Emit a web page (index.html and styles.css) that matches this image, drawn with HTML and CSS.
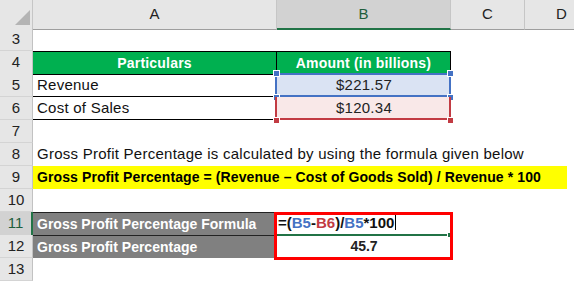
FILE: index.html
```html
<html>
<head>
<meta charset="utf-8">
<title>Gross Profit Percentage</title>
<link rel="stylesheet" href="styles.css">
</head>
<body>
<div class='sheet'>
  <div class='row head'>
    <div class='corner'>
      <svg width='33' height='28'><polygon points='15,25 30,25 30,10' fill='#b4b4b4'/></svg>
    </div>
    <div class='col'>A</div>
    <div class='col active'>B</div>
    <div class='col'>C</div>
    <div class='col'>D</div>
  </div>
  <div class='row'>
    <div class='num'>3</div><div></div><div></div><div></div><div></div>
  </div>
  <div class='row'>
    <div class='num'>4</div>
    <div class='th'>Particulars</div>
    <div class='th'>Amount (in billions)</div>
    <div></div><div></div>
  </div>
  <div class='row'>
    <div class='num'>5</div>
    <div class='label'>Revenue</div>
    <div class='val pick-blue'>$221.57
      <span class='dot tl'></span><span class='dot tr'></span>
      <span class='dot bl'></span><span class='dot br'></span>
    </div>
    <div></div><div></div>
  </div>
  <div class='row'>
    <div class='num'>6</div>
    <div class='label'>Cost of Sales</div>
    <div class='val pick-red'>$120.34
      <span class='dot bl red'></span><span class='dot br red'></span>
    </div>
    <div></div><div></div>
  </div>
  <div class='row'>
    <div class='num'>7</div><div></div><div></div><div></div><div></div>
  </div>
  <div class='row'>
    <div class='num'>8</div>
    <div class='wide'>Gross Profit Percentage is calculated by using the formula given below</div>
  </div>
  <div class='row'>
    <div class='num'>9</div>
    <div class='wide hl'>Gross Profit Percentage = (Revenue – Cost of Goods Sold) / Revenue * 100</div>
  </div>
  <div class='row'>
    <div class='num'>10</div><div></div><div></div><div></div><div></div>
  </div>
  <div class='row'>
    <div class='num current'>11</div>
    <div class='grey'>Gross Profit Percentage Formula</div>
    <div class='formula'>=(<span class='ref-b'>B5</span>-<span class='ref-r'>B6</span>)/<span class='ref-b'>B5</span>*100<span class='caret'></span>
      <span class='dot edit'></span>
    </div>
    <div></div><div></div>
  </div>
  <div class='row'>
    <div class='num'>12</div>
    <div class='grey'>Gross Profit Percentage</div>
    <div class='val result'>45.7</div>
    <div></div><div></div>
  </div>
  <div class='row'>
    <div class='num'>13</div><div></div><div></div><div></div><div></div>
  </div>
</div>
</body>
</html>
```

FILE: styles.css
```css
body {
  margin: 0;
  background: #fff;
  font-family: "Liberation Sans", Arial, sans-serif;
  font-size: 15px;
  letter-spacing: 0.25px;
  color: #111;
  overflow: hidden;
}
.sheet {
  width: 574px;
  height: 283px;
  overflow: hidden;
}
.row {
  display: grid;
  grid-template-columns: 33px 244px 174px 74px 74px;
  height: 23px;
}
.row > div {
  box-sizing: border-box;
  line-height: 22px;
  white-space: nowrap;
  padding: 0 4px;
}
.row.head {
  height: 28px;
}
.corner {
  background: #e6e6e6;
  border-right: 1px solid #c6c6c6;
  border-bottom: 1px solid #9e9e9e;
  padding: 0 !important;
  line-height: 0 !important;
}
.col {
  background: #e6e6e6;
  border-right: 1px solid #c6c6c6;
  border-bottom: 1px solid #9e9e9e;
  text-align: center;
  line-height: 28px !important;
  letter-spacing: 0;
  color: #222;
}
.col.active {
  background: #d2d2d2;
  border-bottom: 2px solid #217346;
  color: #1e5e3c;
}
.num {
  background: #e6e6e6;
  border-right: 1px solid #c2c2c2;
  border-bottom: 1px solid #d4d4d4;
  text-align: center;
  letter-spacing: 0;
  color: #222;
  padding: 0 !important;
}
.num.current {
  background: #d2d2d2;
  border-right: 2px solid #217346;
  color: #1e5e3c;
}
.th {
  background: #00b050;
  color: #fff;
  font-size: 14px;
  font-weight: bold;
  letter-spacing: 0.2px;
  text-align: center;
  border-top: 1px solid #000;
  border-right: 1px solid #000;
  border-bottom: 1px solid #000;
}
.label {
  border-bottom: 1px solid #000;
}
.val {
  text-align: center;
  color: #222;
  position: relative;
}
.pick-blue {
  background: #dae3f3;
}
.pick-blue::before {
  content: '';
  position: absolute;
  top: -1px;
  left: -2px;
  right: 0;
  bottom: 0;
  border: 2px solid #4472c4;
}
.pick-red {
  background: #f9e8e8;
}
.pick-red::before {
  content: '';
  position: absolute;
  top: 0;
  left: -2px;
  right: 0;
  bottom: 0;
  border: 2px solid #c23b43;
  border-top: none;
}
.dot {
  position: absolute;
  width: 5px;
  height: 5px;
  background: #4472c4;
  outline: 1px solid #fff;
}
.dot.red {
  background: #c23b43;
}
.tl { top: -3px; left: -3px; }
.tr { top: -3px; right: -2px; }
.bl { bottom: -3px; left: -3px; }
.br { bottom: -3px; right: -2px; }
.wide {
  grid-column: 2 / -1;
}
.hl {
  background: #ffff00;
  font-size: 14px;
  font-weight: bold;
  letter-spacing: 0.1px;
  margin-right: 32px;
  color: #000;
}
.grey {
  background: #808080;
  color: #fff;
  font-size: 14px;
  font-weight: bold;
  letter-spacing: 0;
  border-top: 1px solid #222;
}
.formula {
  position: relative;
  font-weight: bold;
  letter-spacing: 0;
  color: #111;
  border-bottom: 2px solid #217346;
  margin-right: 4px;
  padding-left: 1px !important;
}
.formula::after {
  content: '';
  position: absolute;
  top: 0;
  left: -3px;
  right: -6px;
  height: 48px;
  border: 3px solid #ff0000;
  box-sizing: border-box;
}
.ref-b {
  color: #4472c4;
}
.ref-r {
  color: #c23b43;
}
.caret {
  display: inline-block;
  width: 1px;
  height: 15px;
  background: #000;
  vertical-align: -2px;
  margin-left: 1px;
}
.dot.edit {
  background: #217346;
  outline: none;
  width: 3px;
  height: 4px;
  right: -4px;
  bottom: -3px;
}
.result {
  font-size: 14px;
  font-weight: bold;
  letter-spacing: 0;
}
.row:nth-child(12) .grey {
  border-bottom: 1px solid #222;
}
```
